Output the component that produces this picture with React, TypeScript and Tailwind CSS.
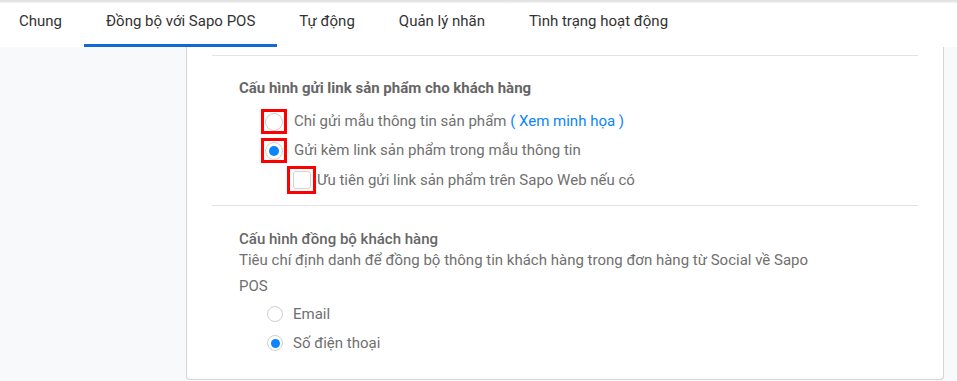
const TABS = ["Chung", "Đồng bộ với Sapo POS", "Tự động", "Quản lý nhãn", "Tình trạng hoạt động"];
const ACTIVE = 1;

function Radio({ checked, size = "lg" }: { checked?: boolean; size?: "lg" | "sm" }) {
  const outer = size === "lg" ? "w-[18px] h-[18px]" : "w-[16px] h-[16px]";
  const dot = size === "lg" ? "w-[10px] h-[10px]" : "w-[9px] h-[9px]";
  return (
    <span className={`${outer} rounded-full border border-[#cfcfcf] bg-white flex items-center justify-center shrink-0`}>
      {checked && <span className={`${dot} rounded-full bg-[#0a84ff]`} />}
    </span>
  );
}

function Marked({ children, w = "w-[26px]", h = "h-[25px]" }: { children: React.ReactNode; w?: string; h?: string }) {
  return (
    <span className={`${w} ${h} border-[3px] border-[#ff0000] flex items-center justify-center shrink-0`}>
      {children}
    </span>
  );
}

export default function App() {
  return (
    <div
      className="w-[957px] h-[381px] overflow-hidden bg-[#f8f9fb] text-[15px]"
      style={{ fontFamily: "Roboto, 'Noto Sans', Arial, sans-serif" }}
    >
      <div className="h-[3px] bg-gradient-to-b from-[#dedede] to-[#f3f3f3]" />
      <div className="h-[44px] bg-white flex items-stretch -ml-[3px]">
        {TABS.map((t, i) => (
          <div
            key={t}
            className={`px-[22px] flex items-center pb-[8px] pt-[3px] text-[#333] ${
              i === ACTIVE ? "border-b-[3px] border-[#1268d6]" : "border-b-[3px] border-transparent"
            }`}
          >
            {t}
          </div>
        ))}
      </div>

      <div className="flex">
        <div className="w-[186px] shrink-0" />
        <div className="w-[758px] h-[333px] bg-white border-x border-b border-[#d4d4d4] rounded-b-[4px] px-[25px] pt-[8px]">
          {/* Section 1 */}
          <div className="border-t border-[#e3e3e3] pl-[27px] pt-[22px] pb-[11px]">
            <div className="font-bold text-[#666] leading-[20px]">Cấu hình gửi link sản phẩm cho khách hàng</div>
            <div className="mt-[11px] ml-[22px] flex flex-col text-[#707070]">
              <div className="flex items-center h-[25px]">
                <Marked>
                  <Radio />
                </Marked>
                <span className="ml-[7px]">
                  Chỉ gửi mẫu thông tin sản phẩm <span className="text-[#0a84ff]">( Xem minh họa )</span>
                </span>
              </div>
              <div className="flex items-center h-[25px] mt-[4px]">
                <Marked>
                  <Radio checked />
                </Marked>
                <span className="ml-[7px]">Gửi kèm link sản phẩm trong mẫu thông tin</span>
              </div>
              <div className="flex items-center h-[28px] mt-[3px] ml-[26px]">
                <Marked w="w-[29px]" h="h-[28px]">
                  <span className="w-[18px] h-[18px] rounded-[3px] border border-[#d3d3d3] bg-white" />
                </Marked>
                <span className="ml-[1px]">Ưu tiên gửi link sản phẩm trên Sapo Web nếu có</span>
              </div>
            </div>
          </div>

          {/* Section 2 */}
          <div className="border-t border-[#e3e3e3] pl-[27px] pt-[25px]">
            <div className="font-medium text-[#666] leading-[16px]">Cấu hình đồng bộ khách hàng</div>
            <div className="text-[#707070] leading-[26px] max-w-[590px]">
              Tiêu chí định danh để đồng bộ thông tin khách hàng trong đơn hàng từ Social về Sapo POS
            </div>
            <div className="mt-[2px] ml-[28px] flex flex-col gap-[3px] text-[#707070]">
              <div className="flex items-center h-[26px] gap-[10px]">
                <Radio size="sm" />
                <span>Email</span>
              </div>
              <div className="flex items-center h-[26px] gap-[10px]">
                <Radio size="sm" checked />
                <span>Số điện thoại</span>
              </div>
            </div>
          </div>
        </div>
      </div>
    </div>
  );
}
